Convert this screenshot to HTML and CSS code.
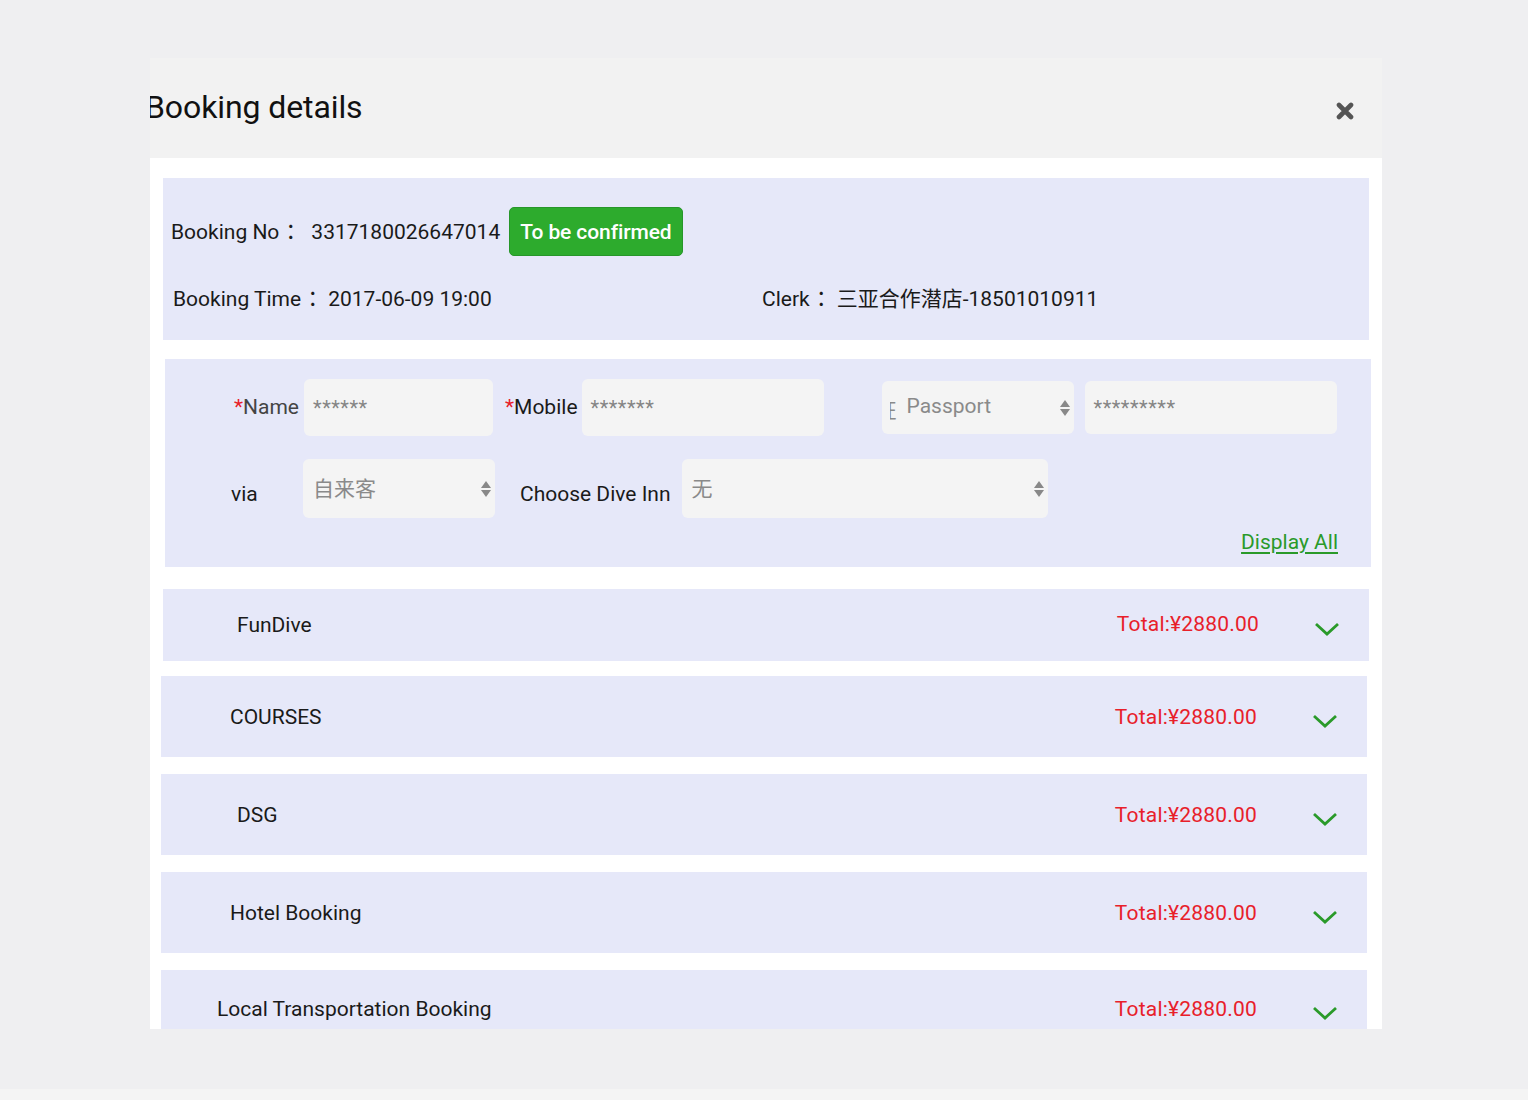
FILE: index.html
```html
<!DOCTYPE html>
<html lang="en">
<head>
<meta charset="utf-8">
<title>Booking details</title>
<link rel="stylesheet" href="styles.css">
</head>
<body>
<div class="page">
  <div class="modal">
    <div class="modal-header">
      <h1 class="title">Booking details</h1>
      <button class="close" aria-label="close">
        <svg width="18" height="18" viewBox="0 0 18 18"><path d="M3 3 L15 15 M15 3 L3 15" stroke="#555" stroke-width="4.6" stroke-linecap="round"/></svg>
      </button>
    </div>
    <div class="modal-body">
      <section class="panel info">
        <div class="info-row first">
          <span class="lbl">Booking No<span class="colon">：</span></span>
          <span class="val num">3317180026647014</span>
          <span class="badge">To be confirmed</span>
        </div>
        <div class="info-row second">
          <div class="cell time"><span class="lbl">Booking Time<span class="colon">：</span></span><span class="val">2017-06-09 19:00</span></div>
          <div class="cell"><span class="lbl">Clerk<span class="colon">：</span></span><span class="val">三亚合作潜店-18501010911</span></div>
        </div>
      </section>

      <section class="panel form">
        <div class="form-row r1">
          <label class="flabel name"><span class="req">*</span>Name</label>
          <div class="input w-name">******</div>
          <label class="flabel mobile"><span class="req">*</span>Mobile</label>
          <div class="input w-mobile">*******</div>
          <div class="select w-doc">
            <span class="clipbox"><span class="cut">证</span><span class="doc">Passport</span></span>
            <span class="arrows"><i class="up"></i><i class="down"></i></span>
          </div>
          <div class="input w-id">*********</div>
        </div>
        <div class="form-row r2">
          <label class="flabel via">via</label>
          <div class="select w-via"><span class="sval">自来客</span><span class="arrows"><i class="up"></i><i class="down"></i></span></div>
          <label class="flabel inn">Choose Dive Inn</label>
          <div class="select w-inn"><span class="sval">无</span><span class="arrows"><i class="up"></i><i class="down"></i></span></div>
        </div>
        <div class="form-foot"><a class="display-all" href="#">Display All</a></div>
      </section>

      <div class="acc acc-a">
        <span class="acc-title">FunDive</span>
        <span class="total">Total:¥2880.00</span>
        <svg class="chev" width="26" height="16" viewBox="0 0 26 16"><path d="M2 3 L13 13 L24 3" fill="none" stroke="#2a9a2a" stroke-width="2.8"/></svg>
      </div>
      <div class="acc acc-b acc-courses">
        <span class="acc-title">COURSES</span>
        <span class="total">Total:¥2880.00</span>
        <svg class="chev" width="26" height="16" viewBox="0 0 26 16"><path d="M2 3 L13 13 L24 3" fill="none" stroke="#2a9a2a" stroke-width="2.8"/></svg>
      </div>
      <div class="acc acc-c">
        <span class="acc-title">DSG</span>
        <span class="total">Total:¥2880.00</span>
        <svg class="chev" width="26" height="16" viewBox="0 0 26 16"><path d="M2 3 L13 13 L24 3" fill="none" stroke="#2a9a2a" stroke-width="2.8"/></svg>
      </div>
      <div class="acc acc-b">
        <span class="acc-title">Hotel Booking</span>
        <span class="total">Total:¥2880.00</span>
        <svg class="chev" width="26" height="16" viewBox="0 0 26 16"><path d="M2 3 L13 13 L24 3" fill="none" stroke="#2a9a2a" stroke-width="2.8"/></svg>
      </div>
      <div class="acc acc-d">
        <span class="acc-title">Local Transportation Booking</span>
        <span class="total">Total:¥2880.00</span>
        <svg class="chev" width="26" height="16" viewBox="0 0 26 16"><path d="M2 3 L13 13 L24 3" fill="none" stroke="#2a9a2a" stroke-width="2.8"/></svg>
      </div>
    </div>
  </div>
</div>
</body>
</html>
```

FILE: styles.css
```css
* { box-sizing: border-box; }
html, body { margin: 0; padding: 0; }
body {
  background: #f4f4f4;
  font-family: Roboto, "Noto Sans CJK SC", sans-serif;
  color: #1a1a1a;
}
.page {
  height: 1089px;
  background: #efeff1;
  padding-top: 58px;
}
.modal {
  width: 1232px;
  height: 971px;
  margin-left: 150px;
  background: #fff;
  overflow: hidden;
}
.modal-header {
  height: 100px;
  background: #f2f2f2;
  display: flex;
  align-items: center;
  justify-content: space-between;
  padding-right: 28px;
}
.title {
  margin: 0 0 0 -5px;
  font-size: 32px;
  font-weight: 400;
  color: #111;
  letter-spacing: -0.1px;
  padding-bottom: 2px;
}
.close {
  border: 0;
  background: none;
  padding: 0;
  margin-top: 6px;
  width: 18px;
  height: 18px;
  display: block;
}
.close svg { display: block; }

.modal-body {
  padding: 20px 0 0 0;
}
.panel {
  background: #e6e8f9;
  width: 1206px;
}
.info {
  margin-left: 13px;
  height: 162px;
  padding: 29px 0 0 8px;
  font-size: 21px;
  line-height: 24px;
}
.lbl { line-height: 24px; }
.colon {
  font-family: "Noto Sans CJK JP", sans-serif;
  display: inline-block;
  width: 21px;
  line-height: 1;
  text-align: center;
  margin-left: 1px;
}
.info-row { display: flex; align-items: center; }
.info-row.first { height: 49px; }
.info-row.second { margin-top: 31px; padding-left: 2px; height: 24px; }
.val.num { margin-left: 10px; }
.badge {
  margin-left: 9px;
  height: 49px;
  padding: 0 10px;
  display: inline-flex;
  align-items: center;
  background: #2dab2d;
  border: 1px solid #27962a;
  border-radius: 5px;
  color: #fff;
  font-weight: 500;
  font-size: 21px;
  letter-spacing: -0.1px;
}
.cell.time { width: 589px; }
.cell .val { margin-left: 5px; }

.form {
  margin: 19px 0 0 15px;
  height: 208px;
  padding-top: 20px;
  font-size: 21px;
}
.form-row { display: flex; align-items: center; }
.r1 { padding-left: 69px; height: 57px; }
.r2 { padding-left: 66px; height: 59px; margin-top: 23px; }
.flabel { color: #1a1a1a; }
.flabel.name { color: #444; margin-right: 5px; padding-bottom: 2px; }
.flabel.mobile { margin: 0 4px 0 12px; padding-bottom: 2px; }
.flabel.via { width: 72px; padding-top: 10px; }
.flabel.inn { margin: 0 11px 0 25px; padding-top: 10px; }
.req { color: #e8202a; }
.input, .select {
  background: #f4f4f4;
  border-radius: 6px;
  color: #8a8a8a;
  position: relative;
}
.input {
  height: 57px;
  padding: 17px 0 0 9px;
  font-size: 20px;
  letter-spacing: 0.5px;
  color: #858585;
}
.w-name { width: 189px; }
.w-mobile { width: 242px; }
.w-doc { width: 192px; height: 53px; margin-left: 58px; }
.w-id { width: 252px; height: 53px; margin-left: 11px; padding-top: 15px; }
.w-via { width: 192px; height: 59px; }
.w-inn { width: 366px; height: 59px; }
.select {
  display: flex;
  align-items: center;
  font-size: 21px;
}
.clipbox {
  margin-left: 8px;
  width: 160px;
  overflow: hidden;
  display: flex;
  white-space: nowrap;
  padding-top: 2px;
}
.cut { margin-left: -14px; }
.doc { margin-left: 10px; }
.sval { margin-left: 10px; padding-bottom: 4px; }
.arrows {
  position: absolute;
  right: 4px;
  top: 50%;
  transform: translateY(-50%);
  display: flex;
  flex-direction: column;
  gap: 2px;
}
.arrows i {
  display: block;
  width: 0;
  height: 0;
  border-left: 5px solid transparent;
  border-right: 5px solid transparent;
}
.arrows .up { border-bottom: 7px solid #888; }
.arrows .down { border-top: 7px solid #888; }

.form-foot {
  display: flex;
  justify-content: flex-end;
  padding-right: 33px;
  margin-top: 12px;
}
.display-all {
  color: #2a9a2a;
  font-size: 21px;
  text-decoration: underline;
  text-underline-offset: 3px;
}

.acc {
  display: flex;
  align-items: center;
  width: 1206px;
  height: 81px;
  margin-left: 11px;
  margin-top: 17px;
  background: #e6e8f9;
  font-size: 21px;
  padding-right: 29px;
}
.acc-a { margin-top: 22px; margin-left: 13px; height: 72px; padding-left: 74px; }
.acc-b { padding-left: 69px; }
.acc-c { padding-left: 76px; }
.acc-d { padding-left: 56px; padding-bottom: 3px; }
.acc.acc-courses { margin-top: 15px; }
.acc-title { flex: 1; color: #1a1a1a; }
.total { color: #e8202a; letter-spacing: 0.2px; }
.chev { margin-left: 55px; margin-top: 8px; }
.acc-a .total { margin-top: -2px; }
```
